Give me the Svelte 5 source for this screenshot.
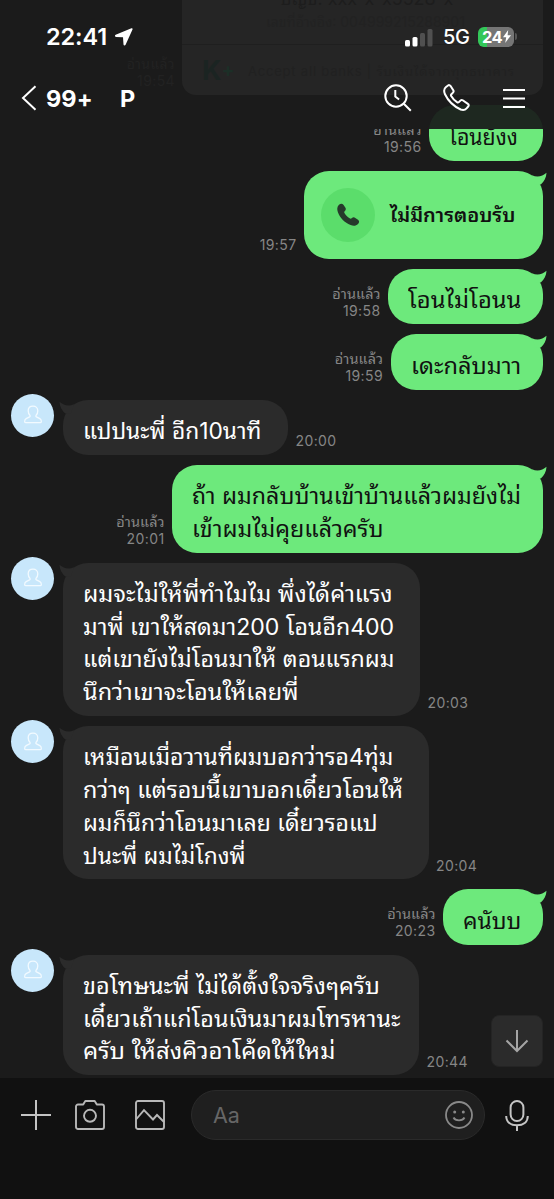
<script>
  const messages = [
    { side: 'out', time: '19:56', read: true, width: 114, lines: [['โอนยังง', 69]] },
    { side: 'out', time: '19:57', read: false, width: 239, call: true, lines: [['ไม่มีการตอบรับ', 125]] },
    { side: 'out', time: '19:58', read: true, width: 155, lines: [['โอนไม่โอนน', 113]] },
    { side: 'out', time: '19:59', read: true, width: 152.5, lines: [['เดะกลับมาา', 110]] },
    { side: 'in', time: '20:00', width: 225.5, lines: [['แปปนะพี่ อีก10นาที', 178]] },
    { side: 'out', time: '20:01', read: true, width: 371, lines: [
      ['ถ้า ผมกลับบ้านเข้าบ้านแล้วผมยังไม่', 329],
      ['เข้าผมไม่คุยแล้วครับ', 192]
    ] },
    { side: 'in', time: '20:03', width: 357.5, lines: [
      ['ผมจะไม่ให้พี่ทำไมไม พึ่งได้ค่าแรง', 310],
      ['มาพี่ เขาให้สดมา200 โอนอีก400', 311],
      ['แต่เขายังไม่โอนมาให้ ตอนแรกผม', 312],
      ['นึกว่าเขาจะโอนให้เลยพี่', 216]
    ] },
    { side: 'in', time: '20:04', width: 366, lines: [
      ['เหมือนเมื่อวานที่ผมบอกว่ารอ4ทุ่ม', 310],
      ['กว่าๆ แต่รอบนี้เขาบอกเดี๋ยวโอนให้', 320],
      ['ผมก็นึกว่าโอนมาเลย เดี๋ยวรอแป', 295],
      ['ปนะพี่ ผมไม่โกงพี่', 163]
    ] },
    { side: 'out', time: '20:23', read: true, width: 100, lines: [['คนับบ', 58]] },
    { side: 'in', time: '20:44', width: 356.5, lines: [
      ['ขอโทษนะพี่ ไม่ได้ตั้งใจจริงๆครับ', 297],
      ['เดี๋ยวเถ้าแก่โอนเงินมาผมโทรหานะ', 317],
      ['ครับ ให้ส่งคิวอาโค้ดให้ใหม่', 252]
    ] }
  ];

  // Scales a single line of text horizontally to its typeset width.
  function fit(node, width) {
    node.style.transform = `scaleX(${width / node.offsetWidth})`;
  }
</script>

<div class="screen">
  <header>
    <div class="under" aria-hidden="true">
      <div class="slip">
        <div class="slip-top"><span class="acct">บัญชี: xxx-x-x5528-x</span><span class="ref">เลขที่อ้างอิง: 004999215288901</span></div>
        <div class="slip-foot"><b>K<i>+</i></b><span>Accept all banks | รับเงินได้จากทุกธนาคาร</span></div>
      </div>
      <div class="old-meta">อ่านแล้ว<br />19:54</div>
      <div class="old-bubble"></div>
    </div>

    <div class="status">
      <span class="clock">22:41</span>
      <svg class="loc" width="20" height="20" viewBox="0 0 20 20"><path d="M17.400 1.200 1.700 7.800c-1.200.5-.9 2 .3 2.100l7 .4.5 7.200c.1 1.200 1.600 1.400 2.100.3l6.900-15.300c.4-.9-.3-1.600-1.100-1.300Z" fill="#fff" /></svg>
      <svg class="bars" width="28" height="19" viewBox="0 0 28 19"><rect x="0" y="12" width="5" height="6.500" rx="1.500" fill="#fff" /><rect x="7.500" y="9" width="5" height="9.500" rx="1.500" fill="#fff" /><rect x="15" y="5" width="5" height="13.500" rx="1.500" fill="#505050" /><rect x="22.500" y="1" width="5" height="17.500" rx="1.500" fill="#505050" /></svg>
      <span class="net">5G</span>
      <span class="battery">24<svg width="8" height="13" viewBox="0 0 8 13"><path d="M5.200 0 0 7.300h3.200L2.200 13 8 5.200H4.600Z" fill="#fff" /></svg></span>
      <span class="nub"></span>
    </div>

    <nav>
      <svg class="back" width="16" height="26" viewBox="0 0 16 26"><path d="M14.500 1.300 2 13l12.500 11.700" fill="none" stroke="#fff" stroke-width="2" /></svg>
      <span class="count">99+</span>
      <span class="name">P</span>
      <svg class="find" width="30" height="30" viewBox="0 0 30 30" fill="none" stroke="#fff" stroke-width="2"><circle cx="13" cy="13" r="10.700" /><path d="m20.800 20.800 7 7M12.300 7v6.500l3.800 3" /></svg>
      <svg class="phone" width="28" height="28" viewBox="0 0 28 28" fill="none" stroke="#fff" stroke-width="2" stroke-linejoin="round"><path d="m3 3 2-1.500c.9-.7 2-.4 2.600.5l2.700 4.300c.5.8.3 1.700-.3 2.300l-1.600 1.600c-.6.6-.6 1.200-.2 1.900 1.500 2.700 3.300 4.500 5.800 6.100.7.500 1.400.400 1.900-.1l1.500-1.500c.7-.7 1.600-.8 2.300-.3l5.200 3.600c1 .6 1.100 1.700.3 2.600l-1.600 1.800c-1.500 1.700-3.500 2-5.900 1.200C10.300 22 5.300 17.200 2 10.200.7 7.300.9 4.700 3 3Z" /></svg>
      <svg class="menu" width="22" height="21" viewBox="0 0 22 21"><path d="M0 2h22M0 10.500h22M0 19h22" stroke="#fff" stroke-width="2.200" /></svg>
    </nav>
  </header>

  <main>
    {#each messages as m}
      <div class="row {m.side}">
        {#if m.side === 'in'}
          <div class="avatar"><svg width="18" height="20" viewBox="0 0 18 20"><path d="M5.900 10.300C4.700 9 4.200 7.300 4.200 5.700 4.200 3 6.200 1.200 9 1.200s4.800 1.800 4.800 4.500c0 1.600-.5 3.300-1.700 4.600-.5.600-.3 1.300.3 1.600l3.400 1.700c1.100.6 1.500 1.400 1.500 2.700v.4c0 .6-.3.900-.9.900H1.600c-.6 0-.9-.3-.9-.9v-.4c0-1.300.4-2.100 1.500-2.700l3.400-1.700c.6-.3.800-1 .3-1.600Z" fill="none" stroke="#f2faff" stroke-width="1.300" /></svg></div>
        {/if}
        <div class="bubble" class:call={m.call} style="width: {m.width}px">
          <svg class="tail" width="18" height="18" viewBox="0 0 18 18"><path d="M3 3.200C8 5.600 13.500 4.500 17.500.8 17.300 5.500 15.300 9.500 11.800 12.500L6 12Z" fill="currentColor" /></svg>
          {#if m.call}
            <span class="disc"><svg width="24" height="24" viewBox="0 0 24 24"><path d="M3 1.800C4.500.4 6.300.3 7.400 1.800l1.900 2.700c.9 1.300.6 2.500-.4 3.500-.8.800-.8 1.400-.3 2.300 1.200 2.100 2.900 3.700 5 5 .9.600 1.600.5 2.300-.2 1-.9 2.200-1.100 3.400-.2l2.700 1.900c1.500 1.100 1.400 2.900 0 4.300-2 2-4.600 2.200-7.400 1C8.500 19.600 4.300 15.500 1.900 9.300.8 6.400 1 3.700 3 1.800Z" fill="#263a2b" /></svg></span>
          {/if}
          <div class="text">
            {#each m.lines as [text, width]}
              <div class="line"><span use:fit={width}>{text}</span></div>
            {/each}
          </div>
        </div>
        <div class="meta">
          {#if m.read}<span class="read">อ่านแล้ว</span>{/if}
          <span>{m.time}</span>
        </div>
      </div>
    {/each}
    <button class="down" aria-label="Latest"><svg width="24" height="24" viewBox="0 0 24 24"><path d="M12 1v20.500M1.500 11.500 12 22l10.500-10.500" fill="none" stroke="#a5a5a5" stroke-width="2" /></svg></button>
  </main>

  <footer>
    <svg class="plus" width="30" height="30" viewBox="0 0 30 30"><path d="M15 0v30M0 15h30" stroke="#c4c4c4" stroke-width="2" /></svg>
    <svg class="camera" width="30" height="30" viewBox="0 0 30 30" fill="none" stroke="#b8b8b8" stroke-width="1.900" stroke-linejoin="round"><path d="M3 4.500h5.200L10.300 1h9.400l2.100 3.500H27a2 2 0 0 1 2 2V27a2 2 0 0 1-2 2H3a2 2 0 0 1-2-2V6.500a2 2 0 0 1 2-2Z" /><circle cx="15" cy="15.800" r="6" /></svg>
    <svg class="photo" width="30" height="30" viewBox="0 0 30 30" fill="none" stroke="#b8b8b8" stroke-width="1.900"><rect x="1" y="1" width="28" height="28" rx="2" /><path d="m1 19.500 8-9.300 9 9.300 4-4.500 7 7" /></svg>
    <div class="field">
      <span>Aa</span>
      <svg width="30" height="30" viewBox="0 0 30 30" fill="none" stroke="#898989" stroke-width="1.800"><circle cx="15" cy="15" r="13" /><path d="M9.500 17.500c1.800 3.700 9.200 3.700 11 0" /><circle cx="10.700" cy="12" r="1.500" fill="#898989" stroke="none" /><circle cx="19.300" cy="12" r="1.500" fill="#898989" stroke="none" /></svg>
    </div>
    <svg class="mic" width="24" height="31" viewBox="0 0 24 31" fill="none" stroke="#c4c4c4" stroke-width="2"><rect x="5.600" y="1" width="12.800" height="20" rx="6.400" /><path d="M1.200 16c0 6 4.500 9.300 10.800 9.300S22.800 22 22.800 16M12 25.300V31" /></svg>
  </footer>
</div>

<style>
  :global(body) { background: #1b1b1b; }
  * { box-sizing: border-box; }
  svg { display: block; flex: none; }
  .screen {
    width: 554px; height: 1199px; overflow: hidden;
    display: flex; flex-direction: column;
    background: #1b1b1b; color: #fff;
    font-family: Inter, "Noto Sans Thai Looped", Loma, "Noto Sans Thai", "Noto Sans", sans-serif;
  }
  header { position: relative; height: 129px; flex: none; overflow: hidden; }
  .under { position: absolute; inset: 0; }
  .slip { position: absolute; left: 182px; top: 0; width: 361px; height: 95px; border-radius: 0 0 14px 14px; background: #252525; color: #212121; overflow: hidden; }
  .slip-top { height: 45px; border-bottom: 1px solid #1f1f1f; position: relative; }
  .acct { position: absolute; left: 98px; top: -12px; font-size: 18px; line-height: 22px; white-space: nowrap; color: #1d1d1d; }
  .ref { position: absolute; left: 84px; top: 13px; font-size: 14px; line-height: 18px; white-space: nowrap; color: #222; }
  .slip-foot { display: flex; align-items: center; height: 50px; padding-left: 20px; font-size: 13px; letter-spacing: .8px; white-space: nowrap; }
  .slip-foot b { display: flex; align-items: center; font-size: 27px; letter-spacing: 0; color: #1b2422; width: 46px; }
  .slip-foot i { font-style: normal; color: #1c2f27; font-size: 19px; }
  .old-meta { position: absolute; right: 379px; top: 55px; font-size: 14px; line-height: 17px; letter-spacing: .4px; text-align: right; color: #222; }
  .old-bubble { position: absolute; left: 429px; top: 105px; width: 114px; height: 55px; border-radius: 26px; background: #1e2820; }

  .status { position: relative; display: flex; align-items: center; height: 73px; padding-left: 46px; }
  .clock { width: 68px; font-size: 23.500px; font-weight: 600; letter-spacing: -.1px; }
  .bars { margin: 1px 0 0 271px; }
  .net { margin-left: 10px; width: 35px; font-size: 20px; font-weight: 500; letter-spacing: -.3px; line-height: 20px; padding-top: 1px; }
  .battery { display: flex; align-items: center; gap: 1px; width: 36px; height: 20px; padding-left: 4px; border-radius: 6px; background: linear-gradient(90deg, #33c759 24%, #757575 24%); font-size: 16.500px; font-weight: 700; letter-spacing: -.6px; }
  .nub { width: 2px; height: 7px; margin-left: 1px; border-radius: 0 2px 2px 0; background: #555; }
  nav { position: relative; display: flex; align-items: center; height: 50px; padding-left: 21px; }
  .count { width: 74px; margin-left: 9px; font-size: 23.500px; font-weight: 700; letter-spacing: .1px; }
  .name { font-size: 23.500px; font-weight: 700; width: 17px; }
  .find { margin-left: 246px; }
  .phone { margin-left: 30px; }
  .menu { margin-left: 32px; }

  main { position: relative; height: 949px; flex: none; overflow: hidden; display: flex; flex-direction: column; gap: 10px; }
  .row { display: flex; align-items: flex-end; flex: none; padding: 0 11px; }
  .row:first-child { margin-top: -23.300px; }
  .row.out { flex-direction: row-reverse; }
  .avatar { align-self: flex-start; display: flex; align-items: center; justify-content: center; width: 43px; height: 43px; margin: -6px 8.500px -40px 0; border-radius: 50%; background: #c8e7fb; }
  .bubble { position: relative; flex: none; padding: 11.300px 20px; border-radius: 25px; }
  .in .bubble { background: #2b2b2b; color: #fff; }
  .out .bubble { background: #6de97c; color: #111; }
  .tail { position: absolute; top: 1px; right: -4px; color: #6de97c; }
  .in .tail { right: auto; left: -4px; transform: scaleX(-1); color: #2b2b2b; }
  .line { height: 32.700px; line-height: 39px; font-size: 22.500px; white-space: nowrap; }
  .line span { display: inline-block; transform-origin: 0 50%; }
  .call { height: 88px; display: flex; align-items: center; gap: 15px; padding: 0 17px; }
  .call .line { font-size: 19px; font-weight: 600; line-height: 33px; }
  .disc { display: flex; align-items: center; justify-content: center; width: 54px; height: 54px; border-radius: 50%; background: #5bdd6b; }
  .meta { display: flex; flex-direction: column; padding: 0 7.500px 5.500px; font-size: 14px; line-height: 17px; letter-spacing: .4px; color: #868686; }
  .out .meta { align-items: flex-end; }
  .read { font-size: 14.500px; letter-spacing: .1px; }
  .down { position: absolute; right: 11px; bottom: 11px; width: 52px; height: 52px; display: flex; align-items: center; justify-content: center; padding: 0; border: 1px solid #242424; border-radius: 8px; background: #2b2b2b; }

  footer { height: 121px; flex: none; display: flex; align-items: flex-start; background: #111; padding: 12px 0 0 20.500px; }
  .plus, .camera, .photo, .mic { margin-top: 10px; }
  .camera { margin-left: 24.500px; }
  .photo { margin-left: 30px; }
  .field { display: flex; align-items: center; justify-content: space-between; width: 294px; height: 50px; margin-left: 26px; padding: 0 10px 0 21px; border: 1px solid #2a2a2a; border-radius: 25px; background: #1f1f1f; color: #666; font-size: 21.500px; }
  .mic { margin-left: 19.500px; }
</style>
